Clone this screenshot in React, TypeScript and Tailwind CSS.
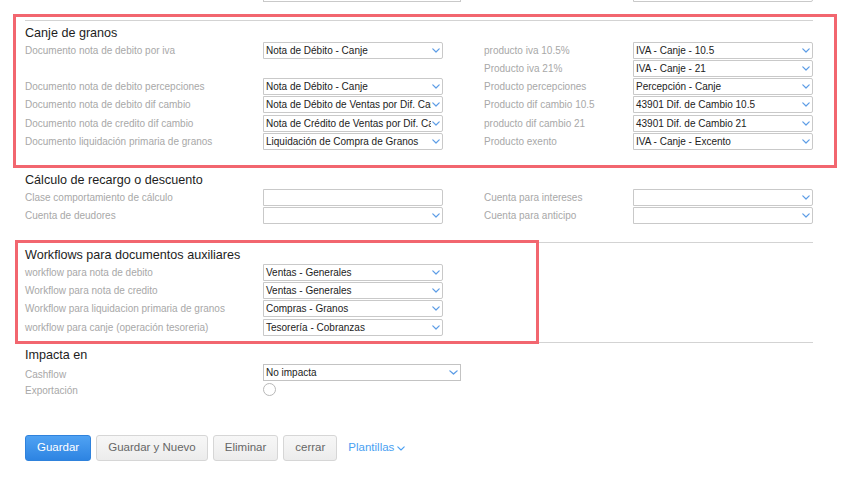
import React from 'react';

const Chevron: React.FC<{ w?: number }> = ({ w = 8 }) => (
  <svg width={w} height={5} viewBox="0 0 8 5" fill="none" preserveAspectRatio="none">
    <path d="M0.8 0.8 L4 4 L7.2 0.8" stroke="#5d9de6" strokeWidth="1.2" strokeLinecap="round" strokeLinejoin="round" />
  </svg>
);

type SelectProps = { value?: string; arrow?: boolean; className?: string };

const Select: React.FC<SelectProps> = ({ value = '', arrow = true, className = 'w-[180px] rounded-r-[2px] border-[#c9c9c9]' }) => (
  <div className={`flex h-[17px] items-center border bg-white ${className}`}>
    <span className="min-w-0 flex-1 overflow-hidden whitespace-nowrap pl-[2px] text-[10px] leading-[15px] text-[#222]">{value}</span>
    {arrow && (
      <span className="flex w-[11px] shrink-0 justify-end pr-[2px]">
        <Chevron />
      </span>
    )}
  </div>
);

const Label: React.FC<{ children?: React.ReactNode }> = ({ children }) => (
  <span className="whitespace-nowrap text-[10px] leading-[17px] text-[#a8a8a8]">{children}</span>
);

type Field = [string, React.ReactNode];

const Row: React.FC<{ left?: Field; right?: Field; className?: string }> = ({ left, right, className = '' }) => (
  <div className={`grid h-[17px] grid-cols-[238px_180px_41px_149px_180px] items-center ${className}`}>
    {left ? (
      <>
        <Label>{left[0]}</Label>
        {left[1]}
      </>
    ) : (
      <>
        <span />
        <span />
      </>
    )}
    <span />
    {right ? (
      <>
        <Label>{right[0]}</Label>
        {right[1]}
      </>
    ) : null}
  </div>
);

const Section: React.FC<{ title: string; className?: string; children: React.ReactNode }> = ({ title, className = '', children }) => (
  <div className={`border-t border-[#d3d3d3] pt-[5px] ${className}`}>
    <h2 className="text-[12.6px] leading-[15px] text-[#1d1d1d]">{title}</h2>
    <div className="mt-px flex flex-col gap-px">{children}</div>
  </div>
);

const Btn: React.FC<{ children: React.ReactNode }> = ({ children }) => (
  <button className="h-[26px] rounded-[3px] border border-[#d6d6d6] bg-gradient-to-b from-[#f7f7f7] to-[#ececec] px-[11px] text-[11.5px] text-[#666]">
    {children}
  </button>
);

export default function App() {
  return (
    <div className="h-[484px] w-[853px] overflow-hidden bg-white" style={{ fontFamily: '"Liberation Sans", Arial, sans-serif' }}>
      <div className="w-[813px] pl-[25px]">
        {/* tail of the previous section, cut by the top of the window */}
        <div className="mt-[-15px] flex h-[17px]">
          <span className="w-[238px]" />
          <Select arrow={false} className="w-[198px] border-[#c9c9c9]" />
          <span className="w-[172px]" />
          <Select />
        </div>

        <div className="relative mt-[18px]">
          <Section title="Canje de granos" className="pb-[17px]">
            <Row
              left={['Documento nota de debito por iva', <Select value="Nota de Débito - Canje" />]}
              right={['producto iva 10.5%', <Select value="IVA - Canje - 10.5" />]}
            />
            <Row right={['Producto iva 21%', <Select value="IVA - Canje - 21" />]} />
            <Row
              left={['Documento nota de debito percepciones', <Select value="Nota de Débito - Canje" />]}
              right={['Producto percepciones', <Select value="Percepción - Canje" />]}
            />
            <Row
              left={['Documento nota de debito dif cambio', <Select value="Nota de Débito de Ventas por Dif. Cambio" />]}
              right={['Producto dif cambio 10.5', <Select value="43901 Dif. de Cambio 10.5" />]}
            />
            <Row
              className="mt-px"
              left={['Documento nota de credito dif cambio', <Select value="Nota de Crédito de Ventas por Dif. Cambio" />]}
              right={['producto dif cambio 21', <Select value="43901 Dif. de Cambio 21" />]}
            />
            <Row
              left={['Documento liquidación primaria de granos', <Select value="Liquidación de Compra de Granos" />]}
              right={['Producto exento', <Select value="IVA - Canje - Excento" />]}
            />
          </Section>
          <div className="pointer-events-none absolute bottom-[-1px] left-[-12px] right-[-24px] top-[-6px] border-[3px] border-[#f2666f]" />
        </div>

        <Section title="Cálculo de recargo o descuento" className="pb-[18px]">
          <Row
            left={['Clase comportamiento de cálculo', <Select arrow={false} />]}
            right={['Cuenta para intereses', <Select />]}
          />
          <Row left={['Cuenta de deudores', <Select />]} right={['Cuenta para anticipo', <Select />]} />
        </Section>

        <div className="relative">
          <Section title="Workflows para documentos auxiliares" className="pb-[6px]">
            <Row left={['workflow para nota de debito', <Select value="Ventas - Generales" />]} />
            <Row left={['Workflow para nota de credito', <Select value="Ventas - Generales" />]} />
            <Row left={['Workflow para liquidacion primaria de granos', <Select value="Compras - Granos" />]} />
            <Row className="mt-px" left={['workflow para canje (operación tesoreria)', <Select value="Tesorería - Cobranzas" />]} />
          </Section>
          <div className="pointer-events-none absolute bottom-[-2px] left-[-10px] right-[274px] top-[-2px] border-[3px] border-[#f2666f]" />
        </div>

        <Section title="Impacta en">
          <div className="flex h-[17px] items-center">
            <span className="w-[238px]">
              <Label>Cashflow</Label>
            </span>
            <div className="flex h-[17px] w-[198px] items-center border border-[#c3c3c3] bg-white">
              <span className="flex-1 pl-[2px] text-[10px] leading-[15px] text-[#222]">No impacta</span>
              <span className="flex w-[13px] justify-end pr-[2px]">
                <Chevron w={9} />
              </span>
            </div>
          </div>
          <div className="mt-[-2px] flex h-[17px] items-center">
            <span className="w-[238px]">
              <Label>Exportación</Label>
            </span>
            <span className="mt-[2px] h-[13px] w-[13px] rounded-full border border-[#b8b8b8] bg-white" />
          </div>
        </Section>

        <div className="mt-[38px] flex items-center gap-[5px]">
          <button className="h-[26px] rounded-[3px] border border-[#2f82dc] bg-gradient-to-b from-[#4fa2f3] to-[#2d84e2] px-[11px] text-[11.5px] text-white">
            Guardar
          </button>
          <Btn>Guardar y Nuevo</Btn>
          <Btn>Eliminar</Btn>
          <Btn>cerrar</Btn>
          <span className="ml-[6px] flex items-center gap-[3px] text-[11.5px] text-[#4a9ff2]">
            Plantillas
            <svg width="8" height="5" viewBox="0 0 8 5" fill="none">
              <path d="M0.8 0.8 L4 4 L7.2 0.8" stroke="#4a9ff2" strokeWidth="1.1" strokeLinecap="round" strokeLinejoin="round" />
            </svg>
          </span>
        </div>
      </div>
    </div>
  );
}
